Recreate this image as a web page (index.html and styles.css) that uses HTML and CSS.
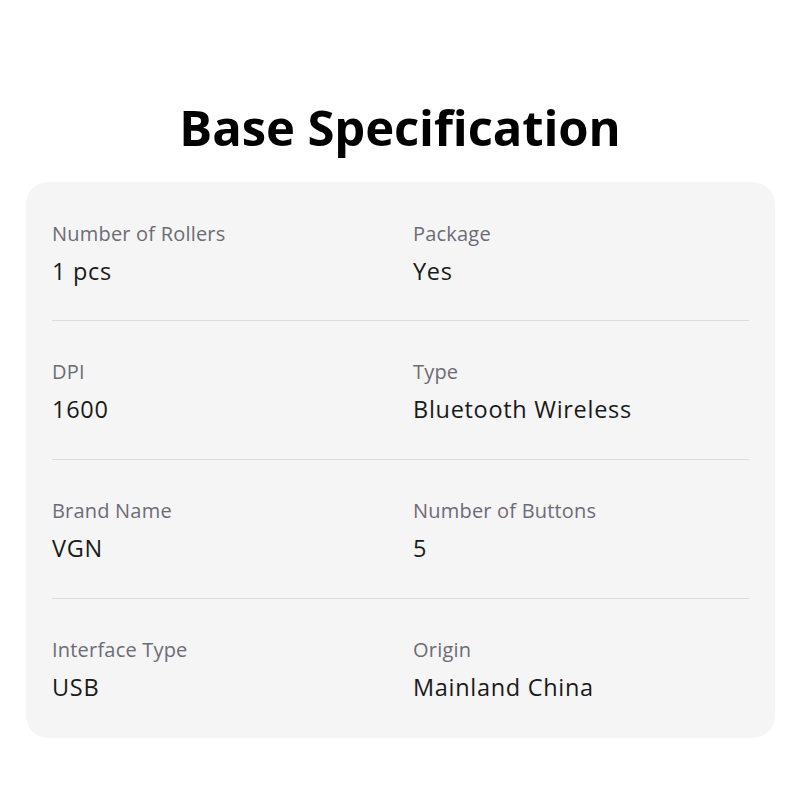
FILE: index.html
```html
<!DOCTYPE html>
<html>
<head>
<meta charset="utf-8">
<link rel="stylesheet" href="styles.css">
</head>
<body>
<h1 class="title">Base Specification</h1>
<div class="card">
  <div class="row">
    <div class="cell"><div class="label">Number of Rollers</div><div class="value">1 pcs</div></div>
    <div class="cell"><div class="label">Package</div><div class="value">Yes</div></div>
  </div>
  <div class="row">
    <div class="cell"><div class="label">DPI</div><div class="value">1600</div></div>
    <div class="cell"><div class="label">Type</div><div class="value">Bluetooth Wireless</div></div>
  </div>
  <div class="row">
    <div class="cell"><div class="label">Brand Name</div><div class="value">VGN</div></div>
    <div class="cell"><div class="label">Number of Buttons</div><div class="value">5</div></div>
  </div>
  <div class="row">
    <div class="cell"><div class="label">Interface Type</div><div class="value">USB</div></div>
    <div class="cell"><div class="label">Origin</div><div class="value">Mainland China</div></div>
  </div>
</div>
</body>
</html>
```
FILE: styles.css
```css
html, body {
  margin: 0;
  padding: 0;
  background: #ffffff;
}
body {
  font-family: "Open Sans", "Noto Sans", sans-serif;
  width: 800px;
}
.title {
  margin: 0;
  padding-top: 92px;
  height: 90px;
  text-align: center;
  font-size: 49px;
  font-weight: 700;
  line-height: 70px;
  color: #000;
  letter-spacing: -0.1px;
}
.card {
  margin: 0 25px 0 26px;
  background: #f5f5f5;
  border-radius: 22px;
  padding: 0 26px;
}
.row {
  display: grid;
  grid-template-columns: 361px 1fr;
  padding: 39px 0 36px;
  border-bottom: 1px solid #dcdcdc;
}
.row:first-child {
  padding-top: 40px;
  padding-bottom: 35px;
}
.row:last-child {
  border-bottom: none;
  padding-bottom: 37px;
}
.label {
  font-size: 20px;
  line-height: 24px;
  color: #6c6c76;
  letter-spacing: 0.2px;
}
.value {
  margin-top: 11px;
  font-size: 23.5px;
  line-height: 28px;
  color: #1a1a1a;
  letter-spacing: 0.7px;
}
```
